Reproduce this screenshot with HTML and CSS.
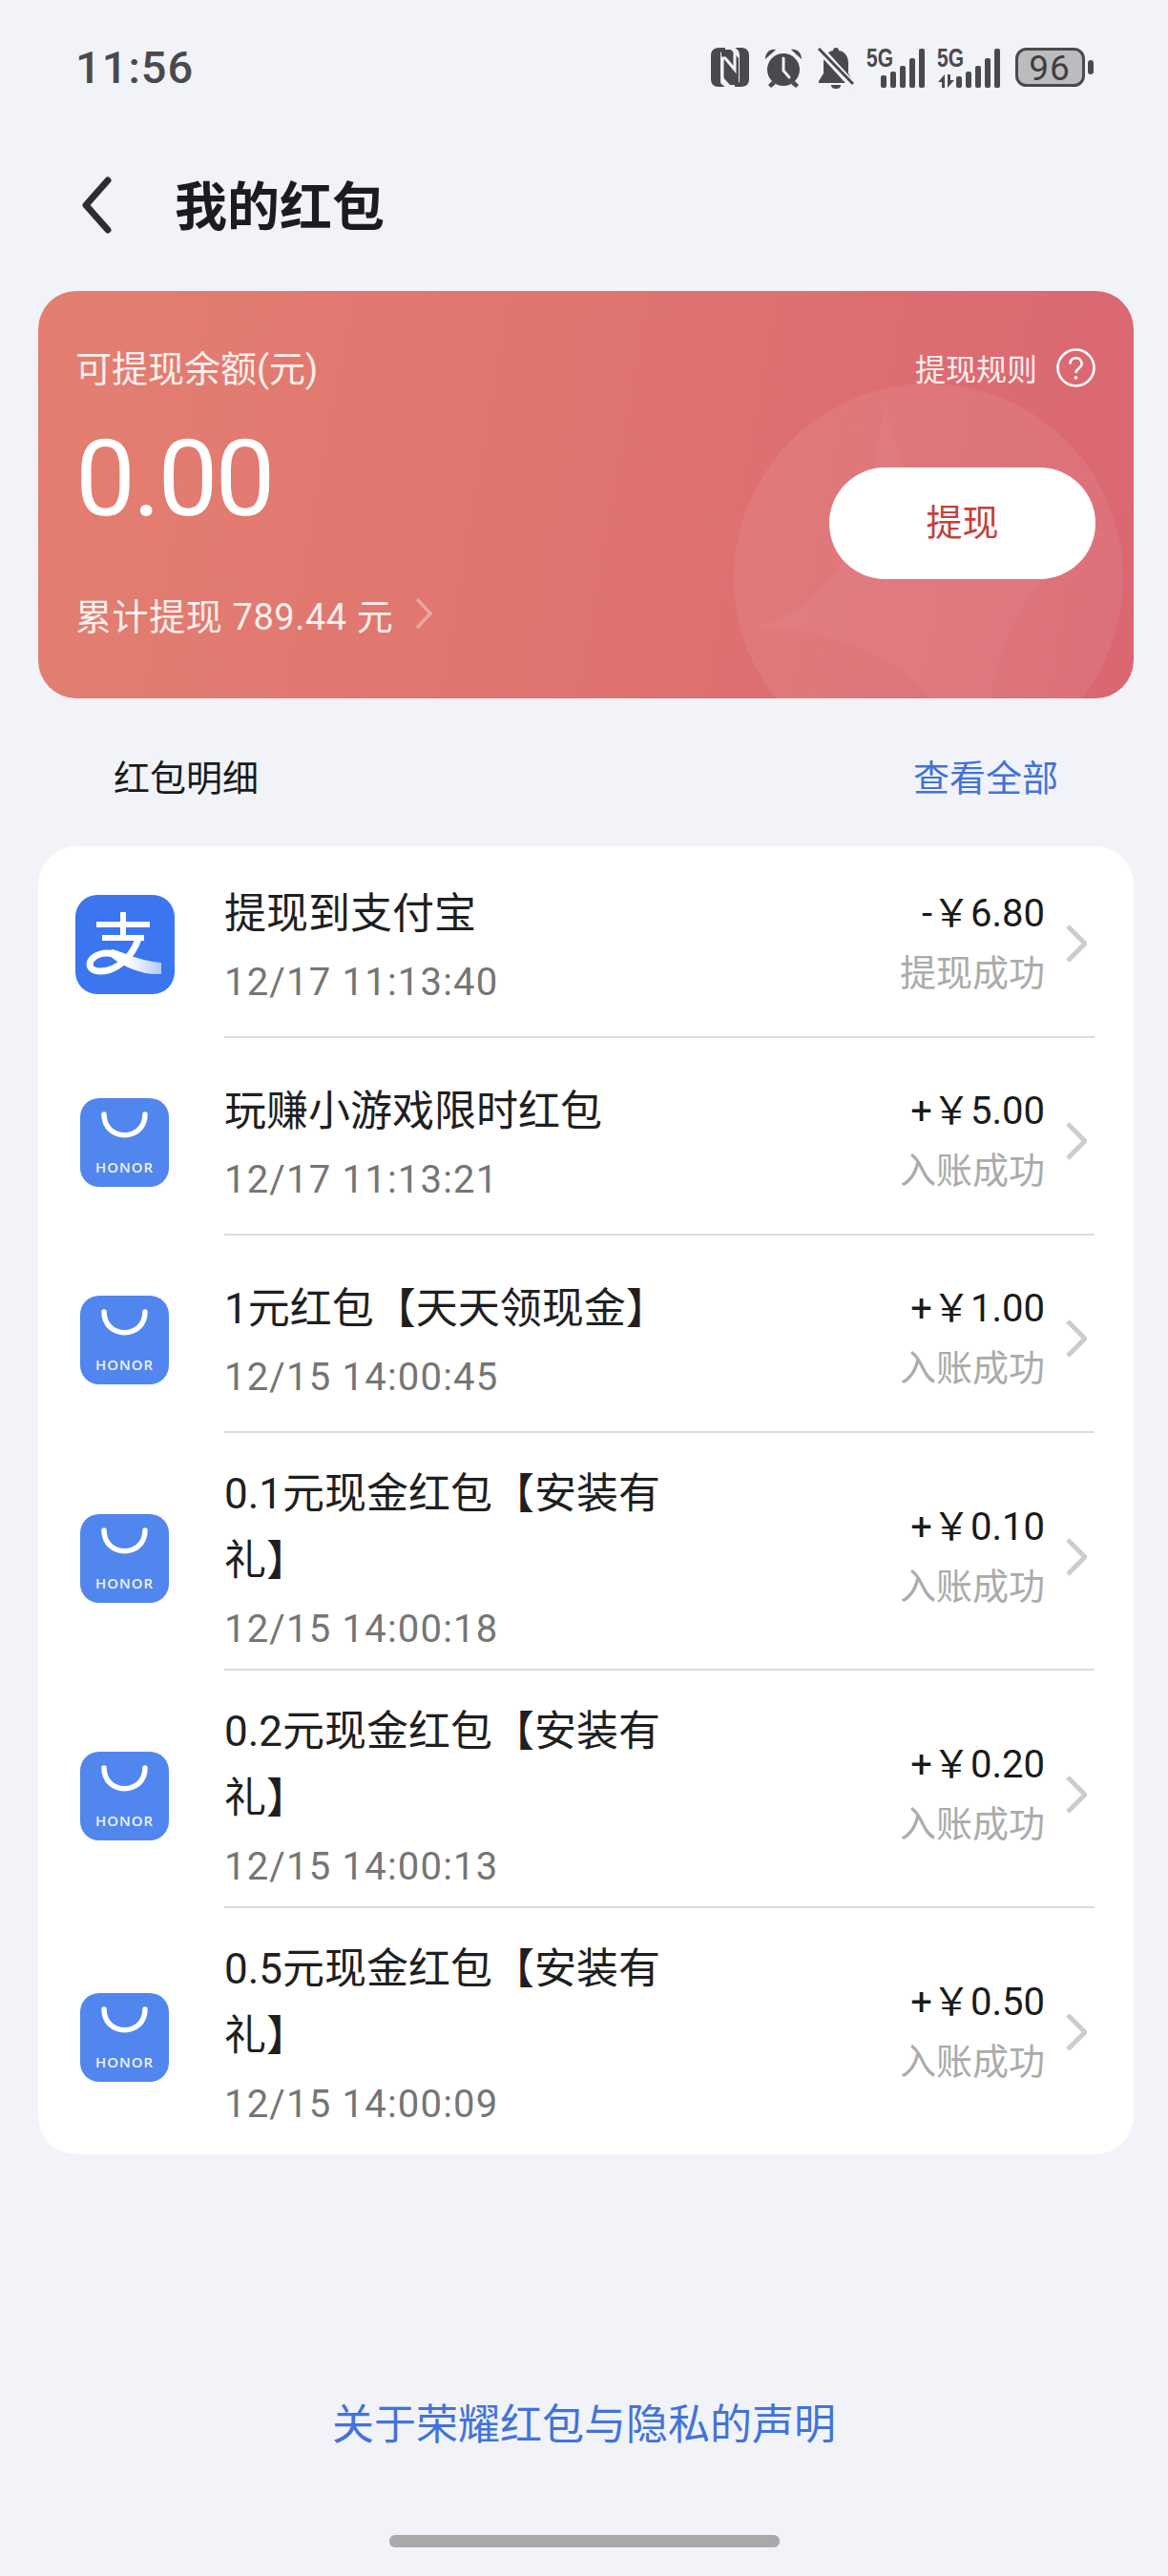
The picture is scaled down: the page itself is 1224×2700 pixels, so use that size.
FILE: index.html
```html
<!DOCTYPE html>
<html lang="zh-CN">

<head>
    <meta charset="UTF-8">
    <meta name="viewport" content="width=device-width, initial-scale=1.0">
    <title>我的红包</title>
    <link rel="stylesheet" href="styles.css">
</head>

<body>
    <div class="status-bar">
        <span class="clock">11:56</span>
        <div class="status-icons">
            <svg class="ic-nfc" viewBox="0 0 40 41">
                <path fill="#4a4a4c" d="M9 0h6v2c-3 0-5 2-5 5v26c0 3 1 6 5 8H8c-5 0-8-3-8-8V8c0-5 3-8 9-8zM25 0h7c5 0 8 3 8 8v25c0 5-3 8-9 8h-6v-2c3 0 5-2 5-5V8c0-3-1-6-5-8z" />
                <path fill="#4a4a4c" d="M12 2h9l8 9v28h-9l-9-10V2z" />
                <path fill="none" stroke="#f1f3f8" stroke-width="3" d="M12 38V11h3l10 12V3" />
            </svg>
            <svg class="ic-alarm" viewBox="0 0 40 42">
                <circle cx="20" cy="23" r="17" fill="#4a4a4c" />
                <path fill="#4a4a4c" d="M1 12C1 5 6 1 12 2zM39 12c0-7-5-11-11-10zM8 35l4 3-5 4-3-3zM32 35l-4 3 5 4 3-3z" />
                <path fill="none" stroke="#f1f3f8" stroke-width="3" stroke-linecap="round" d="M20 11v13l6 7" />
            </svg>
            <svg class="ic-bell" viewBox="0 0 38 43">
                <path fill="#4a4a4c" d="M19 0c2 0 3 1 3 3 7 1 10 7 10 13v11l5 8v2H1v-2l5-8V16C6 9 10 4 16 3c0-2 1-3 3-3z" />
                <path fill="#4a4a4c" d="M14 39h10c0 3-2 4-5 4s-5-1-5-4z" />
                <path stroke="#f1f3f8" stroke-width="8" d="M-2 -3L38 41" />
                <path stroke="#4a4a4c" stroke-width="3" d="M1 1L37 38" />
            </svg>
            <svg class="ic-signal" viewBox="0 -8 62 50">
                <text class="sig-label" x="0" y="20" textLength="28" lengthAdjust="spacingAndGlyphs">5G</text>
                <rect x="15" y="29" width="6" height="13" rx="2" />
                <rect x="25" y="25" width="6" height="17" rx="2" />
                <rect x="35" y="19" width="6" height="23" rx="2" />
                <rect x="45" y="11" width="6" height="31" rx="2" />
                <rect x="55" y="1" width="6" height="41" rx="2" />
            </svg>
            <svg class="ic-signal2" viewBox="0 -8 66 50">
                <text class="sig-label" x="0" y="20" textLength="28" lengthAdjust="spacingAndGlyphs">5G</text>
                <path d="M8 28L1 36H5V42H8zM11 28V42L18 34H14V28z" />
                <rect x="20" y="30" width="6" height="12" rx="2" />
                <rect x="30" y="25" width="6" height="17" rx="2" />
                <rect x="40" y="19" width="6" height="23" rx="2" />
                <rect x="50" y="11" width="6" height="31" rx="2" />
                <rect x="60" y="1" width="6" height="41" rx="2" />
            </svg>
            <svg class="ic-battery" viewBox="0 0 82 42">
                <rect x="1.5" y="1.5" width="70" height="38" rx="10" fill="#bcbcbe" stroke="#4a4a4c" stroke-width="3" />
                <rect x="76" y="13" width="6" height="15" rx="3" fill="#4a4a4c" />
                <text class="bat-label" x="36" y="34" text-anchor="middle">96</text>
            </svg>
        </div>
    </div>

    <header class="nav">
        <svg class="nav-back" viewBox="0 0 34 60">
            <path d="M29 4L6 30l23 26" />
        </svg>
        <h1 class="nav-title">我的红包</h1>
    </header>

    <section class="hero">
        <svg class="hero-deco" viewBox="0 0 1148 427">
            <circle cx="933" cy="301" r="204" fill="#fff" fill-opacity=".07" />
            <path fill="#fff" fill-opacity=".04" d="M888 112C895 170 910 200 960 240C1000 255 1070 260 1126 252C1060 275 1010 340 998 430L939 430C900 385 840 355 752 352C800 340 830 310 850 270C870 230 880 170 888 112z" />
        </svg>
        <div class="hero-top">
            <span class="hero-label">可提现余额(元)</span>
            <span class="hero-rule">提现规则
                <svg class="rule-ic" viewBox="0 0 40 40">
                    <circle cx="20" cy="20" r="18.5" />
                    <path d="M14 16c0-4 3-6 6-6s6 2 6 6c0 4-6 5-6 9" />
                    <circle class="rule-dot" cx="20" cy="30" r="1.8" />
                </svg>
            </span>
        </div>
        <div class="hero-main">
            <div>
                <div class="hero-amount">0.00</div>
                <div class="hero-total">累计提现 789.44 元
                    <svg class="total-arrow" viewBox="0 0 20 34">
                        <path d="M3 2l14 15L3 32" />
                    </svg>
                </div>
            </div>
            <div class="hero-btn">提现</div>
        </div>
    </section>

    <div class="list-head">
        <span>红包明细</span>
        <a class="list-all">查看全部</a>
    </div>

    <section class="list">
        <div class="row row-first">
            <div class="row-ic">
                <svg class="ic-alipay" viewBox="0 0 104 104">
                    <defs>
                        <linearGradient id="ribbon" x1="0" x2="1" y1="0" y2="0">
                            <stop offset=".35" stop-color="#fff" />
                            <stop offset="1" stop-color="#b4caf5" />
                        </linearGradient>
                    </defs>
                    <rect width="104" height="104" rx="23" fill="#3b76f0" />
                    <path stroke="#fff" stroke-width="6" fill="none" d="M22 31h56M50 18v26M28 45h44" />
                    <path stroke="#fff" stroke-width="7" fill="none" d="M66 46C60 64 44 80 26 80C11 80 12 66 26 62C33 60 40 61 48 65" />
                    <path fill="url(#ribbon)" d="M38 57C52 60 62 68 90 71L90 83C72 84 58 78 44 70L36 64z" />
                </svg>
            </div>
            <div class="row-body">
                <div class="row-text">
                    <div class="row-title">提现到支付宝</div>
                    <div class="row-date">12/17 11:13:40</div>
                </div>
                <div class="row-right">
                    <div class="row-amount">-￥6.80</div>
                    <div class="row-status">提现成功</div>
                </div>
                <svg class="row-arrow" viewBox="0 0 22 40"><path d="M2 2l18 18L2 38" /></svg>
            </div>
        </div>

        <div class="row">
            <div class="row-ic">
                <svg class="ic-honor" viewBox="0 0 93 93">
                    <rect width="93" height="93" rx="20" fill="#5186ee" />
                    <path d="M25 17c0 29 43 29 43 0" fill="none" stroke="#fff" stroke-width="5.5" stroke-linecap="round" />
                    <text x="46.5" y="78" text-anchor="middle" class="honor-label">HONOR</text>
                </svg>
            </div>
            <div class="row-body">
                <div class="row-text">
                    <div class="row-title">玩赚小游戏限时红包</div>
                    <div class="row-date">12/17 11:13:21</div>
                </div>
                <div class="row-right">
                    <div class="row-amount">+￥5.00</div>
                    <div class="row-status">入账成功</div>
                </div>
                <svg class="row-arrow" viewBox="0 0 22 40"><path d="M2 2l18 18L2 38" /></svg>
            </div>
        </div>

        <div class="row">
            <div class="row-ic">
                <svg class="ic-honor" viewBox="0 0 93 93">
                    <rect width="93" height="93" rx="20" fill="#5186ee" />
                    <path d="M25 17c0 29 43 29 43 0" fill="none" stroke="#fff" stroke-width="5.5" stroke-linecap="round" />
                    <text x="46.5" y="78" text-anchor="middle" class="honor-label">HONOR</text>
                </svg>
            </div>
            <div class="row-body">
                <div class="row-text">
                    <div class="row-title">1元红包【天天领现金】</div>
                    <div class="row-date">12/15 14:00:45</div>
                </div>
                <div class="row-right">
                    <div class="row-amount">+￥1.00</div>
                    <div class="row-status">入账成功</div>
                </div>
                <svg class="row-arrow" viewBox="0 0 22 40"><path d="M2 2l18 18L2 38" /></svg>
            </div>
        </div>

        <div class="row row-wrap">
            <div class="row-ic">
                <svg class="ic-honor" viewBox="0 0 93 93">
                    <rect width="93" height="93" rx="20" fill="#5186ee" />
                    <path d="M25 17c0 29 43 29 43 0" fill="none" stroke="#fff" stroke-width="5.5" stroke-linecap="round" />
                    <text x="46.5" y="78" text-anchor="middle" class="honor-label">HONOR</text>
                </svg>
            </div>
            <div class="row-body">
                <div class="row-text">
                    <div class="row-title">0.1元现金红包【安装有礼】</div>
                    <div class="row-date">12/15 14:00:18</div>
                </div>
                <div class="row-right">
                    <div class="row-amount">+￥0.10</div>
                    <div class="row-status">入账成功</div>
                </div>
                <svg class="row-arrow" viewBox="0 0 22 40"><path d="M2 2l18 18L2 38" /></svg>
            </div>
        </div>

        <div class="row row-wrap">
            <div class="row-ic">
                <svg class="ic-honor" viewBox="0 0 93 93">
                    <rect width="93" height="93" rx="20" fill="#5186ee" />
                    <path d="M25 17c0 29 43 29 43 0" fill="none" stroke="#fff" stroke-width="5.5" stroke-linecap="round" />
                    <text x="46.5" y="78" text-anchor="middle" class="honor-label">HONOR</text>
                </svg>
            </div>
            <div class="row-body">
                <div class="row-text">
                    <div class="row-title">0.2元现金红包【安装有礼】</div>
                    <div class="row-date">12/15 14:00:13</div>
                </div>
                <div class="row-right">
                    <div class="row-amount">+￥0.20</div>
                    <div class="row-status">入账成功</div>
                </div>
                <svg class="row-arrow" viewBox="0 0 22 40"><path d="M2 2l18 18L2 38" /></svg>
            </div>
        </div>

        <div class="row row-wrap row-last">
            <div class="row-ic">
                <svg class="ic-honor" viewBox="0 0 93 93">
                    <rect width="93" height="93" rx="20" fill="#5186ee" />
                    <path d="M25 17c0 29 43 29 43 0" fill="none" stroke="#fff" stroke-width="5.5" stroke-linecap="round" />
                    <text x="46.5" y="78" text-anchor="middle" class="honor-label">HONOR</text>
                </svg>
            </div>
            <div class="row-body">
                <div class="row-text">
                    <div class="row-title">0.5元现金红包【安装有礼】</div>
                    <div class="row-date">12/15 14:00:09</div>
                </div>
                <div class="row-right">
                    <div class="row-amount">+￥0.50</div>
                    <div class="row-status">入账成功</div>
                </div>
                <svg class="row-arrow" viewBox="0 0 22 40"><path d="M2 2l18 18L2 38" /></svg>
            </div>
        </div>
    </section>

    <a class="privacy">关于荣耀红包与隐私的声明</a>
    <div class="home-bar"></div>
</body>

</html>
```

FILE: styles.css
```css
* {
    box-sizing: border-box;
}

body {
    margin: 0;
    height: 2700px;
    display: flex;
    flex-direction: column;
    background: #f1f3f8;
    color: #1a1a1a;
    font-family: Roboto, "Noto Sans CJK SC", sans-serif;
}

/* status bar */
.status-bar {
    height: 91px;
    padding: 50px 78px 0 79px;
    display: flex;
    justify-content: space-between;
    align-items: flex-start;
}

.clock {
    font-size: 47px;
    line-height: 42px;
    font-weight: 500;
    letter-spacing: 1px;
    color: #4a4a4c;
}

.status-icons {
    display: flex;
    align-items: flex-start;
    fill: #4a4a4c;
}

.ic-nfc { width: 40px; height: 41px; margin-right: 16px; }
.ic-alarm { width: 40px; height: 42px; margin-right: 16px; }
.ic-bell { width: 38px; height: 43px; margin-right: 13px; }
.ic-signal { width: 62px; height: 50px; margin: -8px 12px 0 0; }
.ic-signal2 { width: 66px; height: 50px; margin: -8px 16px 0 0; }
.ic-battery { width: 82px; height: 42px; }

.sig-label {
    font: 700 27px "Liberation Sans", sans-serif;
}

.bat-label {
    font: 400 37px Roboto, sans-serif;
    letter-spacing: 1px;
    fill: #3f3f41;
}

/* title */
.nav {
    height: 214px;
    padding: 34px 0 0 84px;
    display: flex;
    align-items: center;
}

.nav-back {
    width: 34px;
    height: 60px;
    fill: none;
    stroke: #2d2d2f;
    stroke-width: 7;
    stroke-linecap: round;
    stroke-linejoin: round;
}

.nav-title {
    margin: 0 0 6px 65px;
    font-size: 55px;
    font-weight: 700;
    color: #1c1c1e;
}

/* red card */
.hero {
    position: relative;
    height: 427px;
    margin: 0 36px 0 40px;
    padding: 50px 40px 0 39px;
    border-radius: 40px;
    overflow: hidden;
    background: linear-gradient(100deg, #e37f71 0%, #e07570 45%, #da6672 100%);
    color: #fff;
}

.hero-deco {
    position: absolute;
    left: 0;
    top: 0;
    width: 100%;
    height: 100%;
}

.hero-top,
.hero-main {
    position: relative;
}

.hero-top {
    display: flex;
    justify-content: space-between;
    align-items: center;
    height: 56px;
}

.hero-label {
    font-size: 38px;
    color: #fdeeec;
}

.hero-rule {
    display: flex;
    align-items: center;
    padding-top: 4px;
    font-size: 32px;
    color: #fdeeec;
}

.rule-ic {
    width: 41px;
    height: 41px;
    margin-left: 20px;
    fill: none;
    stroke: #fff;
    stroke-width: 2.6;
}

.rule-dot {
    fill: #fff;
    stroke: none;
}

.hero-main {
    display: flex;
    justify-content: space-between;
    align-items: flex-start;
}

.hero-amount {
    margin-top: 32px;
    font-size: 112px;
    line-height: 117px;
    letter-spacing: -3px;
}

.hero-btn {
    width: 279px;
    height: 117px;
    margin-top: 79px;
    border-radius: 59px;
    background: #fff;
    color: #c63f3c;
    font-size: 38px;
    line-height: 117px;
    text-align: center;
}

.hero-total {
    display: flex;
    align-items: center;
    height: 44px;
    margin-top: 61px;
    font-size: 38px;
    letter-spacing: .6px;
    color: #fdeeec;
}

.total-arrow {
    width: 20px;
    height: 34px;
    margin-left: 22px;
    fill: none;
    stroke: #fff;
    stroke-opacity: .35;
    stroke-width: 3.5;
}

/* list */
.list-head {
    height: 155px;
    padding: 6px 115px 0 119px;
    display: flex;
    justify-content: space-between;
    align-items: center;
    font-size: 38px;
}

.list-all {
    color: #4272dc;
}

.list {
    margin: 0 36px 0 40px;
    border-radius: 40px;
    background: #fff;
}

.row {
    display: flex;
}

/* same offset as the uneven padding of row-body, keeps icon level with the arrow */
.row-ic {
    width: 195px;
    flex: none;
    display: flex;
    align-items: center;
    justify-content: center;
    padding: 11px 14px 0 0;
}

.row-first .row-ic {
    padding-top: 5px;
}

.row-wrap .row-ic {
    padding-top: 13px;
}

.ic-alipay {
    width: 104px;
    height: 104px;
}

.ic-honor {
    width: 93px;
    height: 93px;
}

.honor-label {
    font: 600 15px "Open Sans", sans-serif;
    letter-spacing: 1px;
    fill: #eef3ff;
}

.row-body {
    flex: 1;
    display: flex;
    align-items: center;
    margin-right: 41px;
    padding: 42px 0 31px;
    border-bottom: 2px solid #dcdcdc;
}

.row-first .row-body {
    padding: 36px 0 31px;
}

.row-wrap .row-body {
    padding: 29px 0 16px;
}

.row-last .row-body {
    padding-bottom: 27px;
    border-bottom: none;
}

.row-text {
    flex: 1;
}

.row-title {
    width: 480px;
    font-size: 44px;
    line-height: 70px;
    color: #1f1f1f;
}

.row-date {
    font-size: 40px;
    line-height: 50px;
    margin-top: 12px;
    letter-spacing: 1.2px;
    color: #757575;
}

.row-right {
    text-align: right;
}

.row-amount {
    font-size: 40px;
    line-height: 62px;
    color: #1a1a1a;
}

.row-status {
    font-size: 38px;
    line-height: 62px;
    color: #ababab;
}

.row-arrow {
    width: 22px;
    height: 40px;
    margin-left: 22px;
    margin-right: 8px;
    fill: none;
    stroke: #cccccc;
    stroke-width: 5;
}

/* footer */
.privacy {
    margin-top: auto;
    text-align: center;
    font-size: 44px;
    line-height: 60px;
    color: #4272dc;
}

.home-bar {
    width: 409px;
    height: 13px;
    margin: 85px auto 30px;
    border-radius: 6px;
    background: #a9a9a9;
}
```
